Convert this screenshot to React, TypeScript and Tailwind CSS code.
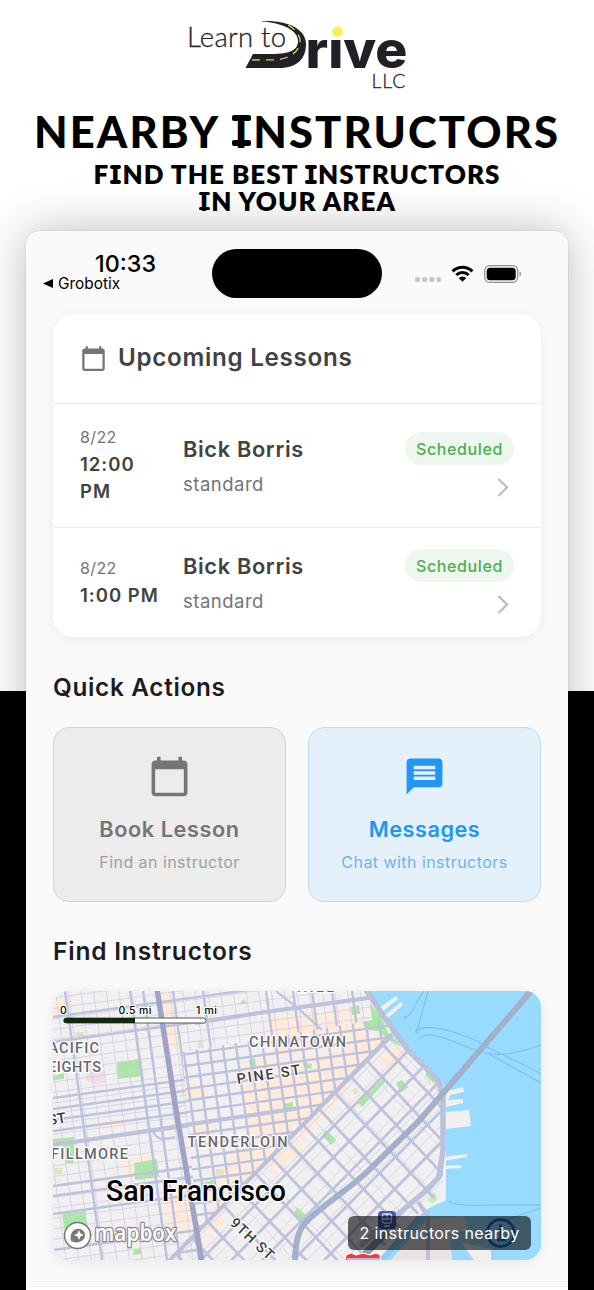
import { MdCalendarToday, MdMessage } from 'react-icons/md';

const LESSONS = [
  { id: 1, date: '8/22', time: '12:00 PM', name: 'Bick Borris', kind: 'standard', status: 'Scheduled' },
  { id: 2, date: '8/22', time: '1:00 PM', name: 'Bick Borris', kind: 'standard', status: 'Scheduled' },
];

function Logo() {
  return (
    <svg width="226" height="84" viewBox="184 16 226 84" className="block">
      <text x="187" y="47.300" fontSize="27.500" fontWeight="300" textLength="99" fontFamily="Lato, sans-serif" fill="#28242b" stroke="#28242b" strokeWidth=".3">
        Learn to
      </text>
      <path
        d="M262 21 C290 20 306 30 306 44 C306 58 298 68 279 68 L245.500 68 L253 54 L272 54 C290 54 298 50 298 41 C298 31 284 23 262 21.500 Z"
        fill="#231f26"
      />
      <path d="M252 60 L277 59.800 C290 58 300 52 300 40 C299 33 293 27 286 24" fill="none" stroke="#d9d35c" strokeWidth="1.300" strokeDasharray="8 6" />
      <text x="305.500" y="67.700" fontSize="51" fontWeight="800" textLength="102" lengthAdjust="spacingAndGlyphs" fontFamily="Inter, sans-serif" fill="#231f26">
        rive
      </text>
      <rect x="329" y="22" width="17" height="16" fill="#fff" />
      <circle cx="337.500" cy="31.500" r="5.200" fill="#fbf04f" />
      <text x="371.500" y="87.700" fontSize="19.500" fontWeight="300" textLength="34" fontFamily="Lato, sans-serif" fill="#28242b" stroke="#28242b" strokeWidth=".3">
        LLC
      </text>
    </svg>
  );
}

// Display lettering: capital I gets slab bars at the top and the bottom
function SlabI({ children, className }: { children: string; className: string }) {
  return children.split(/(I)/).map((part, i) =>
    part === 'I' ? (
      <span
        key={i}
        className={`relative inline-block before:absolute before:rounded-[2px] before:bg-black before:content-[''] after:absolute after:rounded-[2px] after:bg-black after:content-[''] ${className}`}
      >
        I
      </span>
    ) : (
      part
    ),
  );
}

const SLAB_LG = 'px-[3.500px] before:left-[1px] before:right-[2px] before:top-[8px] before:h-[6px] after:left-[1px] after:right-[2px] after:top-[33px] after:h-[6px]';
const SLAB_SM = 'px-[2px] before:left-[.5px] before:right-[1px] before:top-[4px] before:h-[3.500px] after:left-[.5px] after:right-[1px] after:top-[19px] after:h-[3.500px]';

function StatusBar() {
  return (
    <div className="grid h-[83px] grid-cols-[186px_170px_1fr] pt-[18px]">
      <div className="pl-[17px] text-black">
        <p className="pl-[52px] text-[23.300px] font-medium leading-[30px]">10:33</p>
        <p className="flex items-center gap-[5px] text-[15.400px] leading-[8px]">
          <svg width="10" height="9" viewBox="0 0 10 9"><path d="M10 0v9L0 4.500z" /></svg>
          Grobotix
        </p>
      </div>
      <div className="h-[49px] rounded-full bg-black" />
      <div className="flex h-[49px] items-center pl-[33px]">
        <svg width="26" height="6" viewBox="0 0 26 6" className="mt-[13px]" fill="#c6c6c6">
          <rect width="5" height="5" rx="1.500" />
          <rect x="7.200" width="5" height="5" rx="1.500" />
          <rect x="14.400" width="5" height="5" rx="1.500" />
          <rect x="21.500" width="4.500" height="5" rx="1.500" />
        </svg>
        <svg width="23" height="17" viewBox="0 0 23 17" className="ml-[10px]">
          <path d="M1.600 6.400a14 14 0 0 1 19.800 0M5.300 10a8.800 8.800 0 0 1 12.400 0" fill="none" stroke="#000" strokeWidth="3" />
          <path d="M11.500 16.800 7.700 13a5.400 5.400 0 0 1 7.600 0z" />
        </svg>
        <svg width="38" height="18" viewBox="0 0 38 18" className="ml-[10px]">
          <rect x=".7" y=".7" width="33" height="16.600" rx="5" fill="none" stroke="#8e8e8e" strokeWidth="1.200" />
          <rect x="2.700" y="2.700" width="29" height="12.600" rx="3.500" />
          <path d="M35.500 6.500c2 .8 2 4.200 0 5z" fill="#8e8e8e" />
        </svg>
      </div>
    </div>
  );
}

function Lessons() {
  return (
    <section className="rounded-[21px] bg-white shadow-[0_3px_14px_rgba(0,0,0,0.06)]">
      <div className="flex h-[89px] items-center gap-[11px] px-[27px] pb-px">
        <MdCalendarToday size={27} className="text-[#757575]" />
        <h2 className="text-[24.200px] font-semibold leading-[36px] tracking-[0.7px] text-[#424242]">Upcoming Lessons</h2>
      </div>
      {LESSONS.map((lesson) => (
        <div key={lesson.id} className="flex items-center border-t border-[#ececec] px-[27px] pb-[20.500px] pt-[21px]">
          <div className="-mt-px mb-px w-[82px] shrink-0 leading-[27px]">
            <p className="text-[16px] tracking-[0.4px] text-[#757575]">{lesson.date}</p>
            <p className="text-[18.500px] font-semibold tracking-[1px] text-[#424242]">{lesson.time}</p>
          </div>
          <div className="ml-[21px] mt-px flex-1">
            <p className="text-[21.800px] font-semibold leading-[32px] tracking-[0.65px] text-[#424242]">{lesson.name}</p>
            <p className="mt-1 text-[18.500px] leading-[31px] tracking-[0.5px] text-[#757575]">{lesson.kind}</p>
          </div>
          <div className="flex flex-col items-end">
            <span className="flex h-[33px] w-[109px] items-center justify-center rounded-full bg-[#edf7ee] pt-px text-[16px] font-medium tracking-[0.6px] text-[#4caf50]">
              {lesson.status}
            </span>
            <svg width="22" height="34" viewBox="0 0 22 34" className="mt-[1px]" fill="none" stroke="#bdbdbd" strokeWidth="2.200">
              <path d="m6.500 13 8.500 8.500L6.500 30" />
            </svg>
          </div>
        </div>
      ))}
    </section>
  );
}

const range = (from: number, to: number, step: number) =>
  Array.from({ length: Math.floor((to - from) / step) + 1 }, (_, i) => from + i * step);

// Streets west of Market: y at the left edge of the map
const AVENUES = [1017, 1042, 1098, 1109, 1120, 1131, 1145, 1186, 1196, 1214, 1250];
// x at the top edge of the map
const CROSS_STREETS = [65, 130, 143, 173, 203, 266, 293, 312, 332, 352];
const DOWNTOWN_AVENUES = range(1073, 1310, 11.6);

const PEACH = [
  '160,991 176,991 182,1050 168,1050', '53,1000 70,998 72,1014 53,1017', '266,1018 318,1010 324,1050 271,1058',
  '322,1012 360,1006 372,1045 328,1052', '240,1066 270,1058 282,1148 248,1148', '272,1062 345,1052 345,1075 280,1140',
  '300,1100 340,1072 350,1088 300,1142', '230,1150 282,1145 230,1200 210,1213', '122,1160 150,1156 152,1174 126,1178',
  '163,1188 200,1184 190,1232 171,1240', '258,1160 290,1137 304,1149 276,1172', '200,1225 214,1213 226,1223 212,1236',
  '345,1050 378,1033 386,1045 350,1080', '394,1044 408,1056 391,1073 378,1058', '102,1122 122,1119 124,1127 102,1130',
  '182,1085 204,1082 208,1096 184,1099', '190,1122 212,1119 216,1146 194,1149',
];
const PARKS = [
  '117,1062 141,1059 143,1076 118,1079', '53,1076 64,1073 64,1079 53,1080', '134,1163 157,1159 159,1177 135,1180',
  '62,1213 85,1211 88,1228 64,1229', '53,1139 74,1137 74,1163 66,1163 64,1145 53,1147', '351,1007 359,1005 360,1014 352,1015',
  '370,1003 382,1018 388,1033 398,1042 402,1047 395,1044 378,1031 366,1030 362,1022 372,1020',
  '426,1063 433,1071 436,1085 426,1076', '358,1103 384,1078 387,1080 362,1107', '396,1083 402,1080 408,1087 401,1093',
  '322,1135 326,1130 336,1140 331,1145', '297,1207 307,1216 302,1221 294,1213', '239,1004 244,999 247,1004',
  '283,1104 293,1102 293,1109 284,1109', '203,1183 213,1180 214,1190 203,1192', '303,1062 312,1064 311,1069 304,1068',
  '134,1250 141,1248 142,1254 133,1255', '249,1060 255,1058 256,1066 250,1066',
];

function StreetMap() {
  return (
    <svg width="488" height="269" viewBox="53 991 488 269" className="block" fontFamily="Roboto, sans-serif">
      <defs>
        <clipPath id="west"><path d="M53 991H368L386 1018 182 1052 200 1260H53z" /></clipPath>
        <clipPath id="downtown"><path d="M182 1052 386 1018 392 1034 171 1260H200z" /></clipPath>
        <clipPath id="soma"><path d="M392 1034 443 1092V1190L370 1260H170z" /></clipPath>
      </defs>
      <rect x="53" y="991" width="488" height="269" fill="#99dbff" />
      <path d="M53 991H368L396 1040 434 1076 446 1096 446 1200 425 1210 380 1260H53z" fill="#f2eff1" />
      <path d="M428 1218 465 1216 467 1230 450 1235 452 1260H391z" fill="#e9e3e5" />
      <path d="M461 1242 491 1249V1260H474z" fill="#f2eff1" />
      {/* piers */}
      <g fill="#f2eff1">
        <path d="M380 1007 396 996 398 999 383 1011zM385 1015 401 1002 403 1005 388 1018zM437 1082l2-2 1 7 5-1v5z" />
        <path d="M443 1092 463 1087 464 1092 450 1095 448 1100 463 1099V1103L446 1107zM445 1112 469 1110 471 1126 446 1129zM444 1157 467 1154V1157L444 1161zM444 1166 461 1165V1168L444 1169z" />
      </g>
      <g fill="#ffeadb">{PEACH.map((p) => <polygon key={p} points={p} />)}</g>
      <g fill="#a9e8a3">{PARKS.map((p) => <polygon key={p} points={p} />)}</g>
      <path d="m86 1072 18-1 1 11-10 3-9-5z" fill="#f3dce4" />
      <path d="M76 1032h8v7h-8zM198 1040h4v8h-4zM216 1169h8v7h-8zM55 1168h7v6h-7zM352 1090l4-2 3 4-4 3z" fill="#ecdfc0" />
      <path d="m430 1195 5-3 3 7-6 5-5-4z" fill="#c6f2b8" />

      <g clipPath="url(#west)" stroke="#cdd0e3" strokeWidth=".8">
        {range(998, 1300, 10.5).map((y) => <path key={y} d={`M53 ${y}L373 ${y - 44}`} />)}
        {range(30, 365, 12.7).map((x) => <path key={x} d={`M${x} 991L${x + 36} 1260`} />)}
      </g>
      <g clipPath="url(#west)" stroke="#bdc3dc" strokeWidth="2.400">
        {AVENUES.map((y) => <path key={y} d={`M53 ${y}L393 ${y - 47}`} />)}
        {CROSS_STREETS.map((x) => <path key={x} d={`M${x} 991L${x + 37} 1260`} />)}
      </g>
      <g clipPath="url(#downtown)" stroke="#bdc3dc" strokeWidth="2.400">
        {DOWNTOWN_AVENUES.map((y) => <path key={y} d={`M53 ${y}L393 ${y - 48}`} />)}
        {range(162, 380, 13.3).map((x) => <path key={x} d={`M${x} 991L${x + 37} 1260`} />)}
      </g>
      <g stroke="#bdc3dc" fill="none">
        <path d="M53 1145 153 1130 300 1108M195 1023 265 1012 375 997" strokeWidth="4" />
        <path d="M276 991 300 1010 322 1030M153 1130c2 10 10 10 22 7" strokeWidth="2.200" />
      </g>
      <g clipPath="url(#soma)">
        <g stroke="#cdd0e3" strokeWidth=".8">
          {range(-30, 360, 9.4).map((d) => <path key={d} d={`M${160 + d} ${1260 + d}L${400 + d} ${1020 + d}`} />)}
          {range(-160, 200, 26).map((d) => <path key={d} d={`M${290 + d} ${1140 - d}l260 276`} />)}
        </g>
        <g stroke="#bdc3dc" strokeWidth="2.700">
          {range(0, 170, 15.5).map((d) => <path key={d} d={`M${170 + d} ${1260 + d}L${394 + d} ${1034 + d}`} />)}
          {range(-130, 110, 16).map((d) => <path key={d} d={`M${290 + d} ${1140 - d}l220 233`} />)}
        </g>
      </g>
      <g fill="none" stroke="#bbc1da" strokeLinejoin="round">
        <path d="M168 1262 392 1034" strokeWidth="4" />
        <path d="M365 988 382 1014 408 1050 438 1080 443 1096 443 1150 439 1177 428 1189 360 1246" strokeWidth="5.500" />
        <path d="M418 1202 428 1216V1260" strokeWidth="4" />
      </g>
      <path d="M157 989 178 1122 202 1262" stroke="#a0a3c5" strokeWidth="5.500" fill="none" />
      <path d="M532 990 444 1092 419 1121 373 1166C350 1190 324 1203 305 1223 297 1232 295 1246 295 1262" fill="none" stroke="#a2b0c9" strokeWidth="6" />
      <path d="m365 1254 23-23" stroke="#8d9bb5" strokeWidth="7" />
      <path d="m382 1260 38-43" stroke="#8ad0f2" strokeWidth="6" />
      <g fill="none" stroke="#79bff0" strokeWidth="1.100">
        <path d="M424 991C414 1005 410 1020 403 1017M428 991 416 1034M415 1031C430 1021 470 1036 489 1048 506 1057 525 1064 541 1074M419 1039C428 1028 452 1042 470 1048 490 1056 505 1058 541 1045M489 1054 541 1083M449 1201C455 1208 490 1204 541 1205M541 1208 500 1222" />
      </g>

      <g fill="none" stroke="#1a6ee0" strokeWidth="2.700">
        <circle cx="500.700" cy="1233" r="13.500" />
        <path d="M497 1230h4v9m-4 1h9" />
      </g>
      <circle cx="500.500" cy="1226" r="1.800" fill="#1a6ee0" />
      <rect x="378" y="1211" width="18" height="18" rx="4" fill="#4358b8" />
      <g fill="none" stroke="#dfe5fb" strokeWidth="1.300">
        <rect x="382.500" y="1214" width="9" height="9" rx="1.500" />
        <path d="M387 1214v5M382.500 1219h9M384 1226h6" />
      </g>
      <path d="m346 1255 5-2 5 2 7-2 7 2 6-2 4 2 1 7h-36z" fill="#e8413c" stroke="#fff" />
      <path d="M347 1259h33" stroke="#c9afe0" strokeWidth="2" />

      {/* place labels */}
      <g fill="#66666c" fontSize="14.500" fontWeight="500" stroke="#fff" strokeWidth="2.500" paintOrder="stroke" strokeLinejoin="round">
        <text x="249" y="1046.500" textLength="97">CHINATOWN</text>
        <text x="187.500" y="1146.500" textLength="100">TENDERLOIN</text>
        <text x="39" y="1053" textLength="60">PACIFIC</text>
        <text x="37" y="1072" textLength="64">HEIGHTS</text>
        <text x="51" y="1158.500" textLength="77">FILLMORE</text>
        <text x="297" y="992" textLength="37">HILL</text>
        <g fill="#3c3c42">
          <text transform="translate(237.500 1084) rotate(-8.500)" textLength="64">PINE ST</text>
          <text transform="translate(49 1125) rotate(-8.500)">ST</text>
          <text transform="translate(229 1224) rotate(43)" textLength="54">9TH ST</text>
        </g>
      </g>
      <text x="106" y="1200.500" fontSize="29" fontWeight="500" textLength="180" lengthAdjust="spacingAndGlyphs" stroke="#fff" strokeWidth="2.500" paintOrder="stroke" strokeLinejoin="round">
        San Francisco
      </text>

      {/* scale bar */}
      <rect x="64" y="1018" width="142" height="5" rx="2.500" fill="#fff" stroke="#555e55" />
      <path d="M66 1018h69v5H66a2.500 2.500 0 0 1 0-5z" fill="#10280f" />
      <g fontSize="10.500" fontWeight="500" fontFamily="Inter, sans-serif" fill="#000" stroke="#fff" strokeWidth="2" paintOrder="stroke">
        <text x="60" y="1014">0</text>
        <text x="118.500" y="1014" textLength="33">0.5 mi</text>
        <text x="196" y="1014" textLength="21">1 mi</text>
      </g>

      <g>
        <circle cx="77.500" cy="1235.500" r="13" fill="#fff" stroke="#77777a" strokeWidth="1.500" />
        <path d="M71 1241c-2-9 4-13 9-12 7 2 7 11-1 13-3 1-6 0-8-1z" fill="#77777a" />
        <path d="m79 1230 1.500 3.500L84 1235l-3.500 1.500L79 1240l-1.500-3.500L74 1235l3.500-1.500z" fill="#fff" />
        <text x="94.500" y="1241" fontSize="22.500" fontWeight="600" fontFamily="'Open Sans', sans-serif" textLength="82" lengthAdjust="spacingAndGlyphs" fill="#fff" stroke="#8b8b91" strokeWidth="2.600" paintOrder="stroke" strokeLinejoin="round">
          mapbox
        </text>
      </g>
    </svg>
  );
}

export default function App() {
  return (
    <div className="flex h-[1290px] w-[594px] flex-col items-center overflow-hidden bg-[linear-gradient(to_bottom,#fff_690.500px,#000_690.500px)] font-[Inter,sans-serif]">
      <header className="flex h-[231px] shrink-0 flex-col items-center pt-4 text-center font-['Lato',sans-serif] text-black">
        <Logo />
        <h1 className="mt-[7px] whitespace-nowrap text-[43.500px] font-black leading-[48px] tracking-[2.100px]">
          <SlabI className={SLAB_LG}>NEARBY INSTRUCTORS</SlabI>
        </h1>
        <p className="mt-[6px] whitespace-nowrap text-[26px] font-extrabold leading-[26.500px] tracking-[1.050px]">
          <SlabI className={SLAB_SM}>FIND THE BEST INSTRUCTORS</SlabI>
          <br />
          <SlabI className={SLAB_SM}>IN YOUR AREA</SlabI>
        </p>
      </header>

      <main className="flex w-[542px] flex-1 flex-col rounded-t-[14px] bg-[#fafafa] shadow-[0_0_0_1px_rgba(0,0,0,0.05),0_0_48px_rgba(0,0,0,0.27)]">
        <StatusBar />
        <div className="px-[27px]">
          <Lessons />

          <h2 className="mt-[34px] text-[24.300px] font-semibold leading-[32px] tracking-[0.7px] text-[#1c1c1e]">Quick Actions</h2>
          <div className="mt-[24px] grid grid-cols-2 gap-[22px]">
            <button className="flex h-[175px] flex-col items-center rounded-2xl border border-[#d3d3d3] bg-[#ececec] pt-[27px]">
              <MdCalendarToday size={43} className="text-[#757575]" />
              <span className="mt-[15px] text-[21.700px] font-semibold leading-[32px] tracking-[0.6px] text-[#757575]">Book Lesson</span>
              <span className="mt-[5px] text-[16px] leading-[24px] tracking-[0.45px] text-[#a0a0a0]">Find an instructor</span>
            </button>
            <button className="flex h-[175px] flex-col items-center rounded-2xl border border-[#bcdcf7] bg-[#e4f0fa] pt-[27px]">
              <MdMessage size={43} className="text-[#2196f3]" />
              <span className="mt-[15px] text-[21.700px] font-semibold leading-[32px] tracking-[0.5px] text-[#2196f3]">Messages</span>
              <span className="mt-[5px] text-[16px] leading-[24px] tracking-[0.45px] text-[#6bb5f2]">Chat with instructors</span>
            </button>
          </div>

          <h2 className="mt-[33px] text-[24.500px] font-semibold leading-[32px] tracking-[0.8px] text-[#1c1c1e]">Find Instructors</h2>
          <div className="relative mt-[24px] h-[269px] overflow-hidden rounded-2xl shadow-[0_3px_14px_rgba(0,0,0,0.08)]">
            <StreetMap />
            <div className="absolute bottom-[10px] right-[10px] flex h-[34px] w-[183px] items-center justify-center whitespace-nowrap rounded-md bg-black/60 text-[16px] tracking-[0.4px] text-white">
              2 instructors nearby
            </div>
          </div>
        </div>
        <div className="mt-auto h-[4px] border-t border-[#f1f1f1] bg-white" />
      </main>
    </div>
  );
}
